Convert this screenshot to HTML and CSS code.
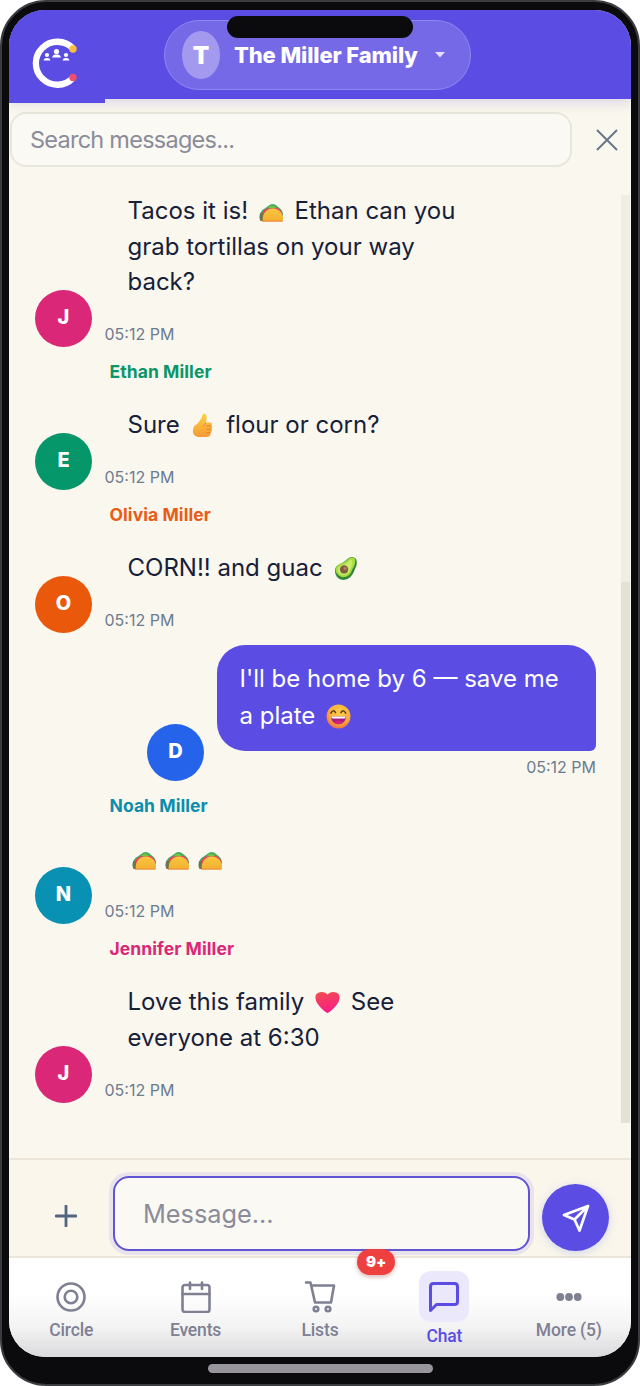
FILE: index.html
```html
<!DOCTYPE html>
<html lang="en">
<head>
<meta charset="utf-8">
<title>Family chat</title>
<link rel="stylesheet" href="styles.css">
</head>
<body>
<svg class="defs" width="0" height="0" aria-hidden="true">
  <defs>
    <linearGradient id="shell" x1="0" y1="0" x2="0" y2="1"><stop offset="0" stop-color="#f9c63c"/><stop offset="1" stop-color="#f4b035"/></linearGradient>
    <linearGradient id="thumb" x1="0" y1="0" x2="0" y2="1"><stop offset="0" stop-color="#ffd13f"/><stop offset="1" stop-color="#f59a38"/></linearGradient>
    <linearGradient id="love" x1="0" y1="0" x2="0.3" y2="1"><stop offset="0" stop-color="#f0504a"/><stop offset="1" stop-color="#fa1d87"/></linearGradient>
    <radialGradient id="face" cx="0.55" cy="0.35" r="0.65"><stop offset="0" stop-color="#ffcf48"/><stop offset="0.65" stop-color="#fbae3e"/><stop offset="1" stop-color="#ee7044"/></radialGradient>
    <symbol id="taco" viewBox="0 0 26 26">
      <path d="M1 22C0 16 2 12 6 10L10 7Q13 4 17 6L21 9Q25 12 25 17L22 21Z" fill="#43a961"/>
      <path d="M3 21C2 16 4 12 8 10L19 9Q24 12 24.500 16L20 21Z" fill="#ef4262"/>
      <path d="M1 15Q0 19 1.500 23H5L4 14Z" fill="#6f7350"/>
      <path d="M9 9.500Q13 4 18 9.500Z" fill="#74c442"/>
      <path d="M4 23C3 15.500 8 10 14.500 10S25.500 15.500 25 21.500Q25 23 23.500 23Z" fill="url(#shell)"/>
      <path d="M3 23H24.500" stroke="#ee8a31" stroke-width="1.200"/>
    </symbol>
    <symbol id="thumbs" viewBox="0 0 26 26">
      <path d="M4 14Q9 11 12 5L13 2Q14 0 16 1Q18.500 3 16.500 10H21Q23.500 10.500 22.500 13Q24 15 22.500 17Q23.500 19.500 21.500 20.500Q21.500 25 17 25H8Q2.500 23.500 3 18Z" fill="url(#thumb)"/>
      <path d="M16.500 10.500Q14 12 14 14M22 13.500H17M22 17H17M21.500 20.500H17" fill="none" stroke="#e87d35" stroke-width="1"/>
    </symbol>
    <symbol id="avocado" viewBox="0 0 26 26">
      <path d="M2 15Q2 10 8 8Q12 6 15 3Q20-1 24 3Q26 8 23 13Q20 24 11 25Q2 24 2 15Z" fill="#31853c"/>
      <path d="M2.500 14Q3 10 8 8Q13 6 16 3Q20 0 23 3Q24 8 20 14Q18 22 10 22Q3 20 2.500 14Z" fill="#a5dc3e"/>
      <path d="M5 14Q6 10 11 9Q15 8 18 4Q21 4 20 9Q17 20 10 20Q5 18 5 14Z" fill="#c8ec6c"/>
      <circle cx="11.500" cy="14" r="4.300" fill="#815d43"/><circle cx="12.500" cy="13" r="1.500" fill="#b8845e"/>
    </symbol>
    <symbol id="grin" viewBox="0 0 26 26">
      <circle cx="13" cy="13" r="12.500" fill="url(#face)"/>
      <path d="M5 9.500Q7.500 5 10 9M15.500 9Q18 5 20.500 9.500" fill="none" stroke="#543323" stroke-width="1.500" stroke-linecap="round"/>
      <path d="M5 13H21Q20 21 13 21T5 13Z" fill="#a3207f"/><path d="M5.500 13H20.500Q20.500 15 19 15H7Q5.500 15 5.500 13Z" fill="#fff"/>
      <path d="M8 18.500Q13 16.500 18 18.500Q16 21 13 21T8 18.500Z" fill="#d9207c"/>
    </symbol>
    <symbol id="heart" viewBox="0 0 26 26">
      <path d="M13 24Q9 22 4 16Q-1 10 1 5Q3 2 7 2Q11 2 13 5Q15 2 19 2Q23 2 25 5Q27 10 22 16Q17 22 13 24Z" fill="url(#love)"/>
    </symbol>
  </defs>
</svg>
<div class="phone">
  <div class="notch"></div>
  <div class="screen">
    <header class="header">
      <div class="brand">
        <svg class="logo" viewBox="0 0 50 54">
          <path d="M41 11.500A21.500 21.500 0 1 0 41 41" fill="none" stroke="#fff" stroke-width="6.300"/>
          <circle cx="41" cy="12" r="3.700" fill="#fdbf3b"/><circle cx="41" cy="40.500" r="3.700" fill="#f04f6b"/>
          <g fill="#fff"><circle cx="15" cy="18" r="2.100"/><path d="M11.500 23.500Q12 21 14 21H16Q18 21 18.500 23.500Z"/><circle cx="24.500" cy="14.500" r="2.600"/><path d="M20 20.500Q21 17.500 23 17.500H26Q28 17.500 29 20.500Z"/><circle cx="34" cy="18" r="2.100"/><path d="M30.500 23.500Q31 21 33 21H35Q37 21 37.500 23.500Z"/></g>
        </svg>
      </div>
      <button class="circle-switch">
        <span class="circle-initial">T</span>
        <span class="circle-name">The Miller Family</span>
        <svg class="caret" viewBox="0 0 10 6"><path d="M0 0H10L5 5.500Z" fill="#e4dfff"/></svg>
      </button>
    </header>

    <div class="search">
      <div class="search-field">Search messages...</div>
      <svg class="close" viewBox="0 0 22 22"><path d="M1 1L21 21M21 1L1 21" stroke="#66778c" stroke-width="2"/></svg>
    </div>

    <main class="messages">
      <div class="thread">
        <article class="message">
          <div class="avatar pink">J</div>
          <div class="body">
            <p class="text first">Tacos it is! <svg class="emoji"><use href="#taco"/></svg> Ethan can you<br>grab tortillas on your way<br>back?</p>
            <time>05:12 PM</time>
          </div>
        </article>
        <article class="message">
          <div class="avatar green">E</div>
          <div class="body">
            <h3 class="name green-text">Ethan Miller</h3>
            <p class="text">Sure <svg class="emoji"><use href="#thumbs"/></svg> flour or corn?</p>
            <time>05:12 PM</time>
          </div>
        </article>
        <article class="message">
          <div class="avatar orange">O</div>
          <div class="body">
            <h3 class="name orange-text">Olivia Miller</h3>
            <p class="text">CORN!! and guac <svg class="emoji"><use href="#avocado"/></svg></p>
            <time>05:12 PM</time>
          </div>
        </article>
        <article class="message own">
          <div class="avatar blue">D</div>
          <div class="body">
            <p class="bubble">I'll be home by 6 — save me<br>a plate <svg class="emoji"><use href="#grin"/></svg></p>
            <time>05:12 PM</time>
          </div>
        </article>
        <article class="message">
          <div class="avatar teal">N</div>
          <div class="body">
            <h3 class="name teal-text">Noah Miller</h3>
            <p class="text emoji-only"><svg class="emoji"><use href="#taco"/></svg><svg class="emoji"><use href="#taco"/></svg><svg class="emoji"><use href="#taco"/></svg></p>
            <time>05:12 PM</time>
          </div>
        </article>
        <article class="message">
          <div class="avatar pink">J</div>
          <div class="body">
            <h3 class="name pink-text">Jennifer Miller</h3>
            <p class="text">Love this family <svg class="emoji"><use href="#heart"/></svg> See<br>everyone at 6:30</p>
            <time>05:12 PM</time>
          </div>
        </article>
      </div>
      <div class="scrollbar"><div class="track"></div><div class="thumb"></div></div>
    </main>

    <div class="composer">
      <svg class="plus" viewBox="0 0 22 22"><path d="M11 1V21M1 11H21" stroke="#526580" stroke-width="2.800" stroke-linecap="round"/></svg>
      <div class="message-field">Message...</div>
      <button class="send">
        <svg viewBox="0 0 28 28" fill="none" stroke="#fff" stroke-width="2.700" stroke-linejoin="round" stroke-linecap="round"><path d="M26 2L2 11L12.500 15.500L17.500 26.500ZM26 2L12.500 15.500"/></svg>
      </button>
    </div>

    <nav class="tabs">
      <a class="tab"><span class="tab-icon"><svg viewBox="0 0 32 32"><circle cx="16" cy="16" r="13.500"/><circle cx="16" cy="16" r="6.300"/></svg></span><span>Circle</span></a>
      <a class="tab"><span class="tab-icon"><svg viewBox="0 0 32 32"><rect x="2.500" y="4" width="27" height="27" rx="2.500"/><path d="M2.500 13H29.500M10 1.500V8M22 1.500V8"/></svg></span><span>Events</span></a>
      <a class="tab"><span class="tab-icon"><svg viewBox="0 0 32 32"><path d="M2 1.500H6.500L11 21.500H27L30 4.500H8"/><circle cx="12" cy="28" r="2.300"/><circle cx="24" cy="28" r="2.300"/></svg></span><span>Lists</span></a>
      <a class="tab active"><span class="tab-icon"><svg viewBox="0 0 32 32"><path d="M2.500 29.500V5.500Q2.500 2.500 5.500 2.500H26.500Q29.500 2.500 29.500 5.500V20.500Q29.500 23.500 26.500 23.500H8.500Z"/></svg></span><span>Chat</span><span class="badge">9+</span></a>
      <a class="tab"><span class="tab-icon"><svg viewBox="0 0 32 32"><g fill="#7f8092" stroke="none"><circle cx="7.300" cy="16" r="3.900"/><circle cx="16" cy="16" r="3.900"/><circle cx="24.700" cy="16" r="3.900"/></g></svg></span><span>More (5)</span></a>
    </nav>
  </div>
  <div class="home-bar"></div>
</div>
</body>
</html>
```

FILE: styles.css
```css
* { box-sizing: border-box; margin: 0; }
body { background: #fff; font-family: Inter, "Liberation Sans", sans-serif; }
button { border: 0; font: inherit; padding: 0; }
.defs { display: block; }
.phone {
  position: relative;
  width: 640px;
  height: 1386px;
  padding: 8px 7px 0;
  border: 2px solid #3b3c40;
  border-radius: 46px;
  background: #0b0b0d;
  overflow: hidden;
}
.screen {
  display: flex;
  flex-direction: column;
  width: 622px;
  height: 1347px;
  border-radius: 36px;
  background: #faf7ee;
  overflow: hidden;
}
.notch {
  position: absolute;
  z-index: 3;
  top: 14px;
  left: 225px;
  width: 186px;
  height: 22px;
  border-radius: 11px;
  background: #0b0b0d;
}

/* Header */
.header {
  position: relative;
  display: flex;
  flex: none;
  height: 89px;
  background: #5b4de3;
  box-shadow: 0 3px 12px rgba(90, 77, 190, .22);
}
.brand {
  flex: none;
  width: 96px;
  height: 93px;
  padding: 27px 0 0 23px;
  background: #5b4de3;
}
.logo { display: block; width: 50px; height: 54px; overflow: visible; }
.circle-switch {
  display: flex;
  align-items: center;
  width: 307px;
  height: 70px;
  margin: 10px 0 0 59px;
  padding-left: 17px;
  border: 1.500px solid #9187f2;
  border-radius: 35px;
  background: #7669e8;
  color: #fff;
  font-weight: 700;
}
.circle-initial {
  width: 38px;
  height: 48px;
  border-radius: 50%;
  background: #a39aef;
  font-size: 24px;
  font-weight: 900;
  line-height: 50px;
  text-align: center;
}
.circle-name {
  width: 184px;
  margin-left: 14px;
  font-size: 22px;
  font-weight: 800;
  letter-spacing: -.12px;
  line-height: 28px;
  text-align: left;
  white-space: nowrap;
}
.caret { width: 10px; height: 6px; margin-left: 17px; }

/* Search */
.search { display: flex; flex: none; align-items: center; height: 79px; padding: 2px 0 0 1px; }
.search-field {
  width: 562px;
  height: 55px;
  padding-left: 18px;
  border: 2px solid #e9e6db;
  border-radius: 16px;
  background: #faf9f3;
  color: #8b8c9a;
  font-size: 23.500px;
  letter-spacing: -.75px;
  line-height: 52px;
}
.close { width: 22px; height: 22px; margin: 1px 0 0 24px; }

/* Messages */
.messages { display: flex; flex: none; height: 980px; padding-top: 15px; }
.thread { display: flex; flex-direction: column; gap: 13.200px; width: 587px; padding-left: 26px; }
.message { display: flex; align-items: flex-end; gap: 12.500px; }
.avatar {
  flex: none;
  width: 57px;
  height: 57px;
  margin-bottom: -1px;
  border-radius: 50%;
  color: #fff;
  font-size: 20px;
  font-weight: 800;
  line-height: 54px;
  text-align: center;
}
.pink { background: #db2777; }
.green { background: #059669; }
.orange { background: #ea580c; }
.blue { background: #2563eb; }
.teal { background: #0891b2; }
.pink-text { color: #db2777; }
.green-text { color: #0b9669; }
.orange-text { color: #e85c17; }
.teal-text { color: #0b8dad; }
.name { height: 24px; padding-left: 5px; font-size: 17.500px; font-weight: 700; letter-spacing: .07px; line-height: 26px; }
.text { padding: 23.500px 23px 22.500px; color: #172039; font-size: 24px; line-height: 35.800px; white-space: nowrap; }
.text.first { padding-top: 0; line-height: 35.500px; }
.emoji { width: 25px; height: 25px; margin: 0 4px; vertical-align: -5px; }
.message time { display: block; height: 24px; color: #6c7c90; font-size: 16px; line-height: 24px; }
.message.own { justify-content: flex-end; gap: 13px; }
.message.own time { height: 29px; line-height: 32px; text-align: right; }
.bubble {
  width: 379px;
  height: 106px;
  padding: 16px 0 0 22.500px;
  border-radius: 28px 28px 6px 28px;
  background: #5b4de3;
  color: #fff;
  font-size: 24px;
  line-height: 36.400px;
  white-space: nowrap;
}
.scrollbar { width: 9px; margin: 2px 0 0 25px; }
.track { height: 387px; background: #efeee3; }
.thumb { height: 541px; background: #e4e2d5; }

/* Composer */
.composer {
  display: flex;
  flex: none;
  align-items: center;
  height: 100px;
  border: solid #ebe5da;
  border-width: 2px 0;
  background: #faf6ec;
}
.plus { width: 22px; height: 22px; margin: 16px 36px 0 46px; }
.message-field {
  width: 417px;
  height: 75px;
  margin-top: 11px;
  padding-left: 28px;
  border: 2px solid #6154d4;
  border-radius: 16px;
  background: #faf9f3;
  box-shadow: 0 0 0 4px #e9e3ec;
  color: #8b8c9a;
  font-size: 25.300px;
  line-height: 71px;
}
.send {
  display: grid;
  place-items: center;
  width: 67px;
  height: 67px;
  margin: 19px 0 0 12px;
  border-radius: 50%;
  background: #5b4de3;
  box-shadow: 0 2px 9px rgba(91, 120, 227, .25);
}
.send svg { width: 28px; height: 28px; }

/* Bottom tabs */
.tabs {
  display: grid;
  flex: none;
  grid-template-columns: repeat(5, 1fr);
  height: 99px;
  background: linear-gradient(#fff 35%, #f3f3f4 70%, #dadadc);
}
.tab {
  position: relative;
  display: flex;
  flex-direction: column;
  align-items: center;
  padding-top: 23px;
  color: #7f8092;
  font: 500 17.500px/22px Roboto, sans-serif;
  letter-spacing: -.15px;
}
.tab-icon { display: grid; place-items: center; width: 50px; height: 32px; margin-bottom: 6px; }
.tab-icon svg { width: 32px; height: 32px; fill: none; stroke: #7f8092; stroke-width: 2.600; stroke-linecap: round; stroke-linejoin: round; }
.tab.active { padding-top: 13px; color: #5b4de3; }
.active .tab-icon { height: 51px; margin-bottom: 3px; border-radius: 12px; background: #ebe8fb; }
.active .tab-icon svg { stroke: #5b4de3; stroke-width: 3; }
.badge {
  position: absolute;
  top: -9px;
  left: -25px;
  width: 38px;
  height: 26px;
  border-radius: 13px;
  background: #ef4040;
  box-shadow: 0 2px 4px rgba(150, 40, 40, .35);
  color: #fff;
  font: 900 15px/26px Inter, sans-serif;
  text-align: center;
}
.home-bar {
  width: 225px;
  height: 9px;
  margin: 7px 0 0 199px;
  border-radius: 5px;
  background: #98969c;
}
```
